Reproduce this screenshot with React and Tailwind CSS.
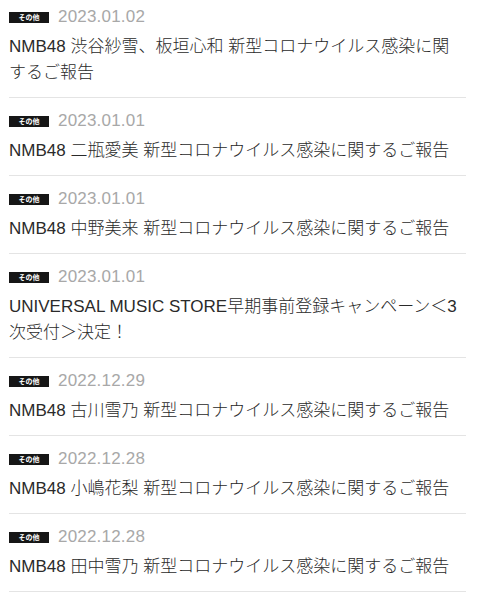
const news = [
  { date: "2023.01.02", title: "NMB48 渋谷紗雪、板垣心和 新型コロナウイルス感染に関するご報告" },
  { date: "2023.01.01", title: "NMB48 二瓶愛美 新型コロナウイルス感染に関するご報告" },
  { date: "2023.01.01", title: "NMB48 中野美来 新型コロナウイルス感染に関するご報告" },
  { date: "2023.01.01", title: "UNIVERSAL MUSIC STORE早期事前登録キャンペーン＜3次受付＞決定！" },
  { date: "2022.12.29", title: "NMB48 古川雪乃 新型コロナウイルス感染に関するご報告" },
  { date: "2022.12.28", title: "NMB48 小嶋花梨 新型コロナウイルス感染に関するご報告" },
  { date: "2022.12.28", title: "NMB48 田中雪乃 新型コロナウイルス感染に関するご報告" },
];

const NewsItem = ({ date, title }) => (
  <li className="border-b border-[#e4e4e4] pt-[12px] pb-[11px]">
    <div className="flex items-center h-[22px] gap-[9px]">
      <span className="flex items-center justify-center w-[40px] h-[11px] bg-[#161616] text-white text-[7px] font-bold leading-none">
        その他
      </span>
      <span className="text-[17px] leading-[22px] text-[#a8a8a8] font-light tracking-[0.2px]">
        {date}
      </span>
    </div>
    <p className="mt-[6px] pr-[6px] text-[17px] leading-[26px] font-light text-[#2a2a2a]">
      {title}
    </p>
  </li>
);

export default function App() {
  return (
    <div
      className="w-[480px] h-[600px] overflow-hidden bg-white"
      style={{ fontFamily: '"Liberation Sans", "Noto Sans CJK JP", sans-serif' }}
    >
      <ul className="ml-[9px] w-[457px] -mt-[6px]">
        {news.map((item, i) => (
          <NewsItem key={i} {...item} />
        ))}
      </ul>
    </div>
  );
}
